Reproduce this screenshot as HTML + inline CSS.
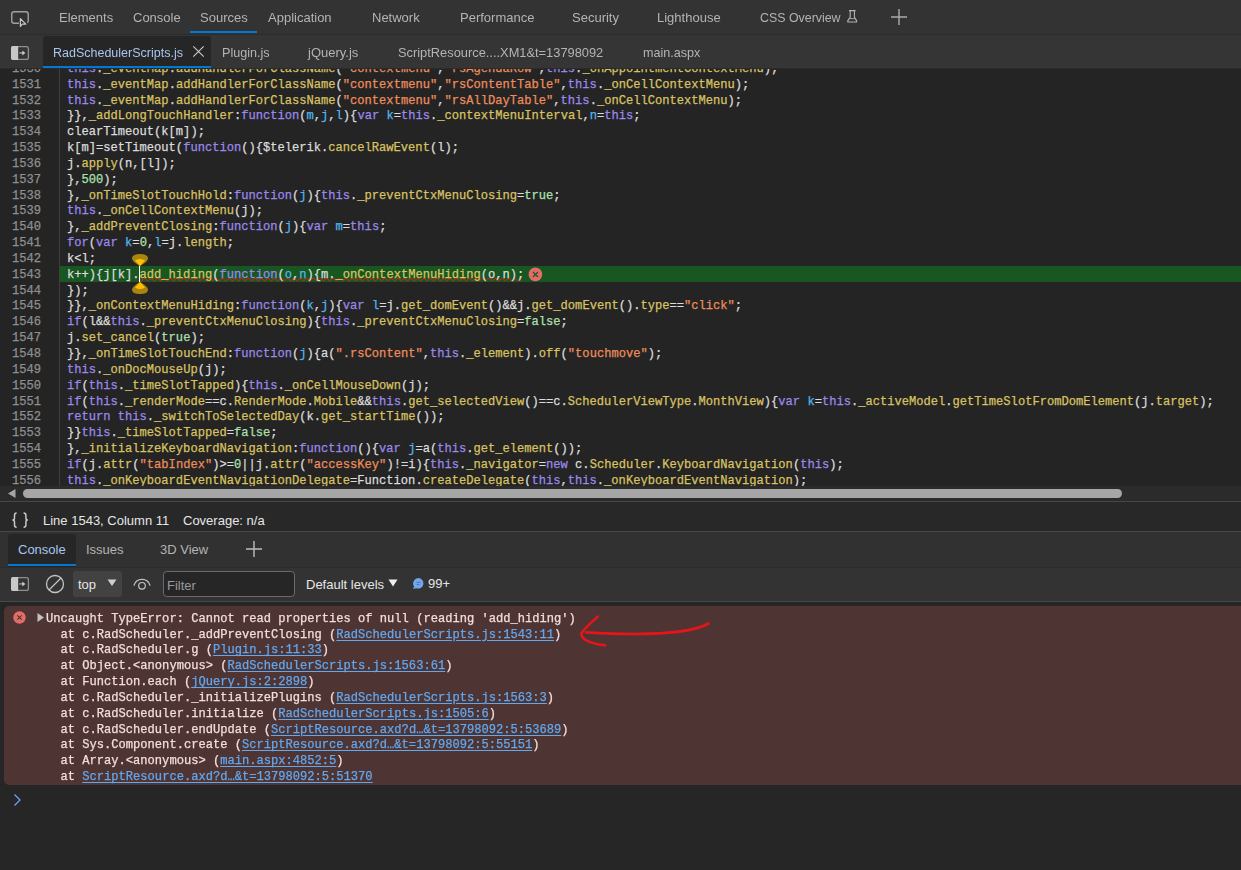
<!DOCTYPE html>
<html><head><meta charset="utf-8">
<style>
*{box-sizing:border-box}
html,body{margin:0;padding:0}
body{width:1241px;height:870px;overflow:hidden;background:#262626;position:relative;font-family:"Liberation Sans",sans-serif;font-size:13px}
.abs{position:absolute}
.g{will-change:transform}
.t{position:absolute;white-space:pre;line-height:15px;font-size:13px;color:#b4b4b4}
#top{left:0;top:0;width:1241px;height:34px;background:#333333}
#topline{left:0;top:34px;width:1241px;height:1px;background:#2c2c2c}
#files{left:0;top:35px;width:1241px;height:33px;background:#353535}
#acttab{left:43px;top:36px;width:168px;height:32px;background:#262626;border-radius:3px 3px 0 0}
.blue{background:#0078d4}
#editor{left:0;top:69px;width:1241px;height:417px;background:#242424;overflow:hidden}
#gutsep{left:59px;top:0;width:1px;height:417px;background:#3f3f3f}
#gutter{left:0;top:-7.2px;width:41px;text-align:right;color:#8f8f8f}
#code{left:67px;top:-7.2px;color:#dcdcdc}
.mono{font-family:"Liberation Mono",monospace;font-size:12.1px;line-height:15.84px;white-space:pre;-webkit-text-stroke:0.25px}
.k{color:#9b89ea}
.p{color:#d8c262}
.s{color:#ec8d5c}
.n{color:#ade0ad}
.d{color:#53b6ec}
#hl{left:60px;top:197px;width:1181px;height:16px;background:#185622}
#hscroll{left:0;top:486px;width:1241px;height:15px;background:#2b2b2b}
#thumb{left:23px;top:489px;width:1099px;height:9px;background:#a6a6a6;border-radius:5px}
#line501{left:0;top:501px;width:1241px;height:1px;background:#474747}
#status{left:0;top:502px;width:1241px;height:29px;background:#282828}
#line531{left:0;top:531px;width:1241px;height:1px;background:#474747}
#dtabs{left:0;top:532px;width:1241px;height:35px;background:#313131}
#ctool{left:0;top:567px;width:1241px;height:34px;background:#333333}
#line601{left:0;top:601px;width:1241px;height:1px;background:#494949}
#err{left:4px;top:606px;width:1241px;height:179px;background:#4f3434;border-radius:5px 0 0 5px}
.msg{color:#f2dede}
.lnk{color:#62a8ef;text-decoration:underline;text-underline-offset:2px}
</style></head><body>
<!-- top tab bar -->
<div class="abs" id="top"></div>
<div class="abs" id="topline"></div>
<svg class="abs" style="left:0;top:0" width="40" height="34" viewBox="0 0 40 34">
  <path d="M19 23.25 H14.25 A2.5 2.5 0 0 1 11.75 20.75 V14.25 A2.5 2.5 0 0 1 14.25 11.75 H25.75 A2.5 2.5 0 0 1 28.25 14.25 V20.75 A2.5 2.5 0 0 1 27.3 22.7" fill="none" stroke="#a0a0a0" stroke-width="1.4"/>
  <path d="M20.4 18.6 V26.4 L22.4 24.2 L25.8 24.2 Z" fill="none" stroke="#c8c8c8" stroke-width="1.2" stroke-linejoin="round"/>
</svg>
<div class="t g" style="left:59px;top:10px">Elements</div>
<div class="t g" style="left:133px;top:10px">Console</div>
<div class="t g" style="left:200px;top:10px">Sources</div>
<div class="abs blue" style="left:190px;top:31px;width:67px;height:2px"></div>
<div class="t g" style="left:268px;top:10px">Application</div>
<div class="t g" style="left:372px;top:10px">Network</div>
<div class="t g" style="left:460px;top:10px">Performance</div>
<div class="t g" style="left:572px;top:10px">Security</div>
<div class="t g" style="left:657px;top:10px">Lighthouse</div>
<div class="t g" style="left:760px;top:11px;font-size:12.4px">CSS Overview</div>
<svg class="abs" style="left:844px;top:8px" width="16" height="18" viewBox="0 0 16 18">
  <path d="M5 2.6 H11.6 M6.2 2.6 V9 L3.9 12.6 Q3.2 14 4.6 14 H11.8 Q13.2 14 12.5 12.6 L10.4 9 V2.6" fill="none" stroke="#b4b4b4" stroke-width="1.1"/>
  <path d="M5.4 10.6 H11" stroke="#9a9a9a" stroke-width="1.1"/>
</svg>
<svg class="abs" style="left:889px;top:7px" width="20" height="20" viewBox="0 0 20 20">
  <path d="M10 2 V18 M2 10 H18" stroke="#acacac" stroke-width="1.4"/>
</svg>

<!-- file tabs -->
<div class="abs" id="files"></div>
<div class="abs" style="left:0;top:68px;width:1241px;height:1px;background:#2b2b2b"></div>
<svg class="abs" style="left:8px;top:40px" width="26" height="24" viewBox="0 0 26 24">
  <rect x="3.6" y="6.6" width="16.8" height="12.8" rx="2" fill="none" stroke="#909090" stroke-width="1.3"/>
  <path d="M10.2 6 H5 A2 2 0 0 0 3 8 V18 A2 2 0 0 0 5 20 H10.2 Z" fill="#c8c8c8"/>
  <path d="M11.3 12.9 H15" stroke="#a0a0a0" stroke-width="1.5"/>
  <path d="M14.3 10.4 L17.3 12.9 L14.3 15.4 Z" fill="#cccccc"/>
</svg>
<div class="abs" id="acttab"></div>
<div class="abs blue" style="left:43px;top:66px;width:168px;height:2px"></div>
<div class="t g" style="left:53px;top:46px;color:#a8c6ee;font-size:12.5px">RadSchedulerScripts.js</div>
<svg class="abs" style="left:191px;top:44px" width="15" height="16" viewBox="0 0 15 16">
  <path d="M2.3 2.3 L12.7 12.7 M12.7 2.3 L2.3 12.7" stroke="#cccccc" stroke-width="1.1"/>
</svg>
<div class="t g" style="left:222px;top:46px;font-size:12.6px">Plugin.js</div>
<div class="t g" style="left:308px;top:45px">jQuery.js</div>
<div class="t g" style="left:398px;top:45px;font-size:12.85px">ScriptResource....XM1&amp;t=13798092</div>
<div class="t g" style="left:643px;top:46px;font-size:12.6px">main.aspx</div>

<!-- editor -->
<div class="abs" id="editor">
  <div class="abs" id="hl"></div>
  <svg class="abs" style="left:0;top:0" width="1241" height="417" viewBox="0 69 1241 417"><polyline id="wavy" fill="none" stroke="#b8271b" stroke-width="1.1" points="140.00,279.4 141.25,280.9 144.50,278.2 147.75,280.9 151.00,278.2 154.25,280.9 157.50,278.2 160.75,280.9 164.00,278.2 167.25,280.9 170.50,278.2 173.75,280.9 177.00,278.2 180.25,280.9 183.50,278.2 186.75,280.9 190.00,278.2 193.25,280.9 196.50,278.2 199.75,280.9 203.00,278.2 206.25,280.9 209.50,278.2 212.75,280.9 216.00,278.2 219.25,280.9 222.50,278.2 225.75,280.9 229.00,278.2 232.25,280.9 235.50,278.2 238.75,280.9 242.00,278.2 245.25,280.9 248.50,278.2 251.75,280.9 255.00,278.2 258.25,280.9 261.50,278.2 264.75,280.9 268.00,278.2 271.25,280.9 274.50,278.2 277.75,280.9 281.00,278.2 284.25,280.9 287.50,278.2 290.75,280.9 294.00,278.2 297.25,280.9 300.50,278.2 303.75,280.9 307.00,278.2 310.25,280.9 313.50,278.2 316.75,280.9 320.00,278.2 323.25,280.9 326.50,278.2 329.75,280.9 333.00,278.2 336.25,280.9 339.50,278.2 342.75,280.9 346.00,278.2 349.25,280.9 352.50,278.2 355.75,280.9 359.00,278.2 362.25,280.9 365.50,278.2 368.75,280.9 372.00,278.2 375.25,280.9 378.50,278.2 381.75,280.9 385.00,278.2 388.25,280.9 391.50,278.2 394.75,280.9 398.00,278.2 401.25,280.9 404.50,278.2 407.75,280.9 411.00,278.2 414.25,280.9 417.50,278.2 420.75,280.9 424.00,278.2 427.25,280.9 430.50,278.2 433.75,280.9 437.00,278.2 440.25,280.9 443.50,278.2 446.75,280.9 450.00,278.2 453.25,280.9 456.50,278.2 459.75,280.9 463.00,278.2 466.25,280.9 469.50,278.2 472.75,280.9 476.00,278.2 479.25,280.9 482.50,278.2 485.75,280.9 489.00,278.2 492.25,280.9 495.50,278.2 498.75,280.9 502.00,278.2 505.25,280.9 508.50,278.2 511.75,280.9 515.00,278.2 518.25,280.9 521.50,278.2"/></svg>
  <div class="abs" id="gutsep"></div>
  <div class="abs mono" id="gutter">1530
1531
1532
1533
1534
1535
1536
1537
1538
1539
1540
1541
1542
1543
1544
1545
1546
1547
1548
1549
1550
1551
1552
1553
1554
1555
1556
1557</div>
  <div class="abs mono" id="code"><span class="k">this</span>.<span class="p">_eventMap</span>.<span class="p">addHandlerForClassName</span>(<span class="s">"contextmenu"</span>,<span class="s">"rsAgendaRow"</span>,<span class="k">this</span>.<span class="p">_onAppointmentContextMenu</span>);
<span class="k">this</span>.<span class="p">_eventMap</span>.<span class="p">addHandlerForClassName</span>(<span class="s">"contextmenu"</span>,<span class="s">"rsContentTable"</span>,<span class="k">this</span>.<span class="p">_onCellContextMenu</span>);
<span class="k">this</span>.<span class="p">_eventMap</span>.<span class="p">addHandlerForClassName</span>(<span class="s">"contextmenu"</span>,<span class="s">"rsAllDayTable"</span>,<span class="k">this</span>.<span class="p">_onCellContextMenu</span>);
}},<span class="p">_addLongTouchHandler</span>:<span class="k">function</span>(<span class="d">m</span>,<span class="d">j</span>,<span class="d">l</span>){<span class="k">var</span> <span class="d">k</span>=<span class="k">this</span>.<span class="p">_contextMenuInterval</span>,<span class="d">n</span>=<span class="k">this</span>;
clearTimeout(k[m]);
k[m]=setTimeout(<span class="k">function</span>(){$telerik.<span class="p">cancelRawEvent</span>(l);
j.<span class="p">apply</span>(n,[l]);
},<span class="n">500</span>);
},<span class="p">_onTimeSlotTouchHold</span>:<span class="k">function</span>(<span class="d">j</span>){<span class="k">this</span>.<span class="p">_preventCtxMenuClosing</span>=<span class="n">true</span>;
<span class="k">this</span>.<span class="p">_onCellContextMenu</span>(j);
},<span class="p">_addPreventClosing</span>:<span class="k">function</span>(<span class="d">j</span>){<span class="k">var</span> <span class="d">m</span>=<span class="k">this</span>;
<span class="k">for</span>(<span class="k">var</span> <span class="d">k</span>=<span class="n">0</span>,<span class="d">l</span>=j.<span class="p">length</span>;
k&lt;l;
k++){j[k].<span class="p">add_hiding</span>(<span class="k">function</span>(<span class="d">o</span>,<span class="d">n</span>){m.<span class="p">_onContextMenuHiding</span>(o,n);
});
}},<span class="p">_onContextMenuHiding</span>:<span class="k">function</span>(<span class="d">k</span>,<span class="d">j</span>){<span class="k">var</span> <span class="d">l</span>=j.<span class="p">get_domEvent</span>()&amp;&amp;j.<span class="p">get_domEvent</span>().<span class="p">type</span>==<span class="s">"click"</span>;
<span class="k">if</span>(l&amp;&amp;<span class="k">this</span>.<span class="p">_preventCtxMenuClosing</span>){<span class="k">this</span>.<span class="p">_preventCtxMenuClosing</span>=<span class="n">false</span>;
j.<span class="p">set_cancel</span>(<span class="n">true</span>);
}},<span class="p">_onTimeSlotTouchEnd</span>:<span class="k">function</span>(<span class="d">j</span>){a(<span class="s">".rsContent"</span>,<span class="k">this</span>.<span class="p">_element</span>).<span class="p">off</span>(<span class="s">"touchmove"</span>);
<span class="k">this</span>.<span class="p">_onDocMouseUp</span>(j);
<span class="k">if</span>(<span class="k">this</span>.<span class="p">_timeSlotTapped</span>){<span class="k">this</span>.<span class="p">_onCellMouseDown</span>(j);
<span class="k">if</span>(<span class="k">this</span>.<span class="p">_renderMode</span>==c.<span class="p">RenderMode</span>.<span class="p">Mobile</span>&amp;&amp;<span class="k">this</span>.<span class="p">get_selectedView</span>()==c.<span class="p">SchedulerViewType</span>.<span class="p">MonthView</span>){<span class="k">var</span> <span class="d">k</span>=<span class="k">this</span>.<span class="p">_activeModel</span>.<span class="p">getTimeSlotFromDomElement</span>(j.<span class="p">target</span>);
<span class="k">return</span> <span class="k">this</span>.<span class="p">_switchToSelectedDay</span>(k.<span class="p">get_startTime</span>());
}}<span class="k">this</span>.<span class="p">_timeSlotTapped</span>=<span class="n">false</span>;
},<span class="p">_initializeKeyboardNavigation</span>:<span class="k">function</span>(){<span class="k">var</span> <span class="d">j</span>=a(<span class="k">this</span>.<span class="p">get_element</span>());
<span class="k">if</span>(j.<span class="p">attr</span>(<span class="s">"tabIndex"</span>)&gt;=<span class="n">0</span>||j.<span class="p">attr</span>(<span class="s">"accessKey"</span>)!=i){<span class="k">this</span>.<span class="p">_navigator</span>=<span class="k">new</span> c.<span class="p">Scheduler</span>.<span class="p">KeyboardNavigation</span>(<span class="k">this</span>);
<span class="k">this</span>.<span class="p">_onKeyboardEventNavigationDelegate</span>=Function.<span class="p">createDelegate</span>(<span class="k">this</span>,<span class="k">this</span>.<span class="p">_onKeyboardEventNavigation</span>);
}<span class="k">if</span>(<span class="k">this</span>.<span class="p">_renderMode</span>==c.<span class="p">RenderMode</span>.<span class="p">Mobile</span>){<span class="k">this</span>.<span class="p">_addTouchHandlers</span>();</div>
</div>
<!-- cursor + markers -->
<svg class="abs" style="left:0;top:0" width="1241" height="500" viewBox="0 0 1241 500">
  <rect x="139" y="266" width="1" height="16" fill="#ffffff"/>
  <path d="M132 258.5 Q132 254 140 254 Q148 254 148 258.5 Q148 261.5 140 266 Q132 261.5 132 258.5Z" fill="#a98510"/>
  <path d="M135 260.5 Q140 257.5 145 260.5 L140 266Z" fill="#ffbf00"/>
  <path d="M132 289.5 Q132 294 140 294 Q148 294 148 289.5 Q148 286.5 140 282 Q132 286.5 132 289.5Z" fill="#a98510"/>
  <path d="M135 287.5 Q140 290.5 145 287.5 L140 282Z" fill="#ffbf00"/>
  <circle cx="535.4" cy="274.4" r="6.8" fill="#e46c68"/>
  <path d="M533 272 L538 277 M538 272 L533 277" stroke="#185622" stroke-width="1.1"/>
</svg>

<!-- horizontal scrollbar -->
<div class="abs" id="hscroll"></div>
<svg class="abs" style="left:6px;top:487px" width="12" height="12" viewBox="0 0 12 12">
  <path d="M2 6.5 L9.5 2 V11 Z" fill="#a6a6a6"/>
</svg>
<div class="abs" id="thumb"></div>
<div class="abs" id="line501"></div>

<!-- status bar -->
<div class="abs" id="status"></div>
<svg class="abs" style="left:0;top:505px" width="40" height="30" viewBox="0 505 40 30">
  <path d="M16.6 512.9 Q14.5 512.9 14.5 515.2 V518.3 Q14.5 520.1 12.4 520.1 Q14.5 520.1 14.5 521.9 V525 Q14.5 527.2 16.6 527.2" fill="none" stroke="#c8c8c8" stroke-width="1.5"/>
  <path d="M23.6 512.9 Q25.9 512.9 25.9 515.2 V518.3 Q25.9 520.1 27.9 520.1 Q25.9 520.1 25.9 521.9 V525 Q25.9 527.2 23.6 527.2" fill="none" stroke="#c8c8c8" stroke-width="1.5"/>
</svg>
<div class="t" style="left:43px;top:513px;color:#e6e6e6">Line 1543, Column 11</div>
<div class="t" style="left:183px;top:513px;color:#e6e6e6">Coverage: n/a</div>
<div class="abs" id="line531"></div>

<!-- drawer tabs -->
<div class="abs" id="dtabs"></div>
<div class="abs" style="left:8px;top:534px;width:68px;height:33px;background:#262626;border-radius:3px 3px 0 0"></div>
<div class="abs blue" style="left:8px;top:564px;width:68px;height:2px"></div>
<div class="t" style="left:18px;top:542px;color:#a8c6ee">Console</div>
<div class="t" style="left:86px;top:542px">Issues</div>
<div class="t" style="left:160px;top:542px">3D View</div>
<svg class="abs" style="left:244px;top:539px" width="20" height="20" viewBox="0 0 20 20">
  <path d="M10 2 V18 M2 10 H18" stroke="#bdbdbd" stroke-width="1.4"/>
</svg>

<!-- console toolbar -->
<div class="abs" id="ctool"></div>
<div class="abs" style="left:0;top:567px;width:1241px;height:1px;background:#2c2c2c"></div>
<svg class="abs" style="left:8px;top:571px" width="26" height="24" viewBox="0 0 26 24">
  <rect x="3.6" y="6.6" width="16.8" height="12.8" rx="2" fill="none" stroke="#909090" stroke-width="1.3"/>
  <path d="M10.2 6 H5 A2 2 0 0 0 3 8 V18 A2 2 0 0 0 5 20 H10.2 Z" fill="#c8c8c8"/>
  <path d="M11.3 12.9 H15" stroke="#a0a0a0" stroke-width="1.5"/>
  <path d="M14.3 10.4 L17.3 12.9 L14.3 15.4 Z" fill="#cccccc"/>
</svg>
<svg class="abs" style="left:44px;top:574px" width="22" height="22" viewBox="0 0 22 22">
  <circle cx="11" cy="10" r="8.5" fill="none" stroke="#c4c4c4" stroke-width="1.3"/>
  <path d="M5 16 L17 4" stroke="#c4c4c4" stroke-width="1.3"/>
</svg>
<div class="abs" style="left:73px;top:571px;width:49px;height:26px;background:#424242;border-radius:3px"></div>
<div class="t" style="left:78px;top:577px;color:#e6e6e6">top</div>
<svg class="abs" style="left:106px;top:578px" width="12" height="10" viewBox="0 0 12 10">
  <path d="M1.5 1.5 H10.5 L6 8 Z" fill="#d0d0d0"/>
</svg>
<svg class="abs" style="left:131px;top:576px" width="22" height="16" viewBox="0 0 22 16">
  <path d="M2.9 9.6 A8.4 8.4 0 0 1 19.1 9.6" fill="none" stroke="#c4c4c4" stroke-width="1.3"/>
  <circle cx="11" cy="9.8" r="3.3" fill="none" stroke="#c4c4c4" stroke-width="1.2"/>
</svg>
<div class="abs" style="left:163px;top:571px;width:132px;height:26px;background:#262626;border:1px solid #6a6a6a;border-radius:4px"></div>
<div class="t" style="left:167px;top:578px;color:#9a9a9a">Filter</div>
<div class="t" style="left:306px;top:577px;color:#e6e6e6">Default levels</div>
<svg class="abs" style="left:387px;top:578px" width="12" height="10" viewBox="0 0 12 10">
  <path d="M1.5 1.5 H10.5 L6 8.5 Z" fill="#eeeeee"/>
</svg>
<svg class="abs" style="left:411px;top:576px" width="16" height="16" viewBox="0 0 16 16">
  <path d="M7.6 2 A5.3 5.3 0 1 1 5.2 12.2 L2.2 13 L3 10.2 A5.3 5.3 0 0 1 7.6 2Z" fill="#74a6ee"/>
  <path d="M5.6 6.4 H9.6 M5.6 8.6 H8.6" stroke="#4a6fa6" stroke-width="0.9"/>
</svg>
<div class="t" style="left:428px;top:576px;color:#e6e6e6">99+</div>
<div class="abs" id="line601"></div>

<!-- console messages -->
<div class="abs" id="err"></div>
<svg class="abs" style="left:12px;top:610px" width="16" height="16" viewBox="0 0 16 16">
  <circle cx="7.5" cy="7.5" r="6.2" fill="#e46c68"/>
  <path d="M5.3 5.3 L9.7 9.7 M9.7 5.3 L5.3 9.7" stroke="#4f3434" stroke-width="1.1"/>
</svg>
<svg class="abs" style="left:35px;top:611px" width="12" height="14" viewBox="0 0 12 14">
  <path d="M2.5 2 L9 6.5 L2.5 11 Z" fill="#c2c2c2"/>
</svg>
<div class="abs mono msg" style="left:46px;top:611.7px">Uncaught TypeError: Cannot read properties of null (reading 'add_hiding')
  at c.RadScheduler._addPreventClosing (<span class="lnk">RadSchedulerScripts.js:1543:11</span>)
  at c.RadScheduler.g (<span class="lnk">Plugin.js:11:33</span>)
  at Object.&lt;anonymous&gt; (<span class="lnk">RadSchedulerScripts.js:1563:61</span>)
  at Function.each (<span class="lnk">jQuery.js:2:2898</span>)
  at c.RadScheduler._initializePlugins (<span class="lnk">RadSchedulerScripts.js:1563:3</span>)
  at c.RadScheduler.initialize (<span class="lnk">RadSchedulerScripts.js:1505:6</span>)
  at c.RadScheduler.endUpdate (<span class="lnk">ScriptResource.axd?d…&amp;t=13798092:5:53689</span>)
  at Sys.Component.create (<span class="lnk">ScriptResource.axd?d…&amp;t=13798092:5:55151</span>)
  at Array.&lt;anonymous&gt; (<span class="lnk">main.aspx:4852:5</span>)
  at <span class="lnk">ScriptResource.axd?d…&amp;t=13798092:5:51370</span></div>
<svg class="abs" style="left:0;top:590px" width="1241" height="80" viewBox="0 590 1241 80">
  <path d="M708.6 623.5 C690 634 640 635.5 586 632.4" fill="none" stroke="#e8141a" stroke-width="2.6" stroke-linecap="round"/>
  <path d="M597.7 616.6 Q585 628 581.5 633 Q580 642 605.2 645.4" fill="none" stroke="#e8141a" stroke-width="2.6" stroke-linecap="round"/>
</svg>
<svg class="abs" style="left:10px;top:792px" width="14" height="16" viewBox="0 0 14 16">
  <path d="M4.5 2.5 L10 8 L4.5 13.5" fill="none" stroke="#6ea2f0" stroke-width="1.3"/>
</svg>
</body></html>
